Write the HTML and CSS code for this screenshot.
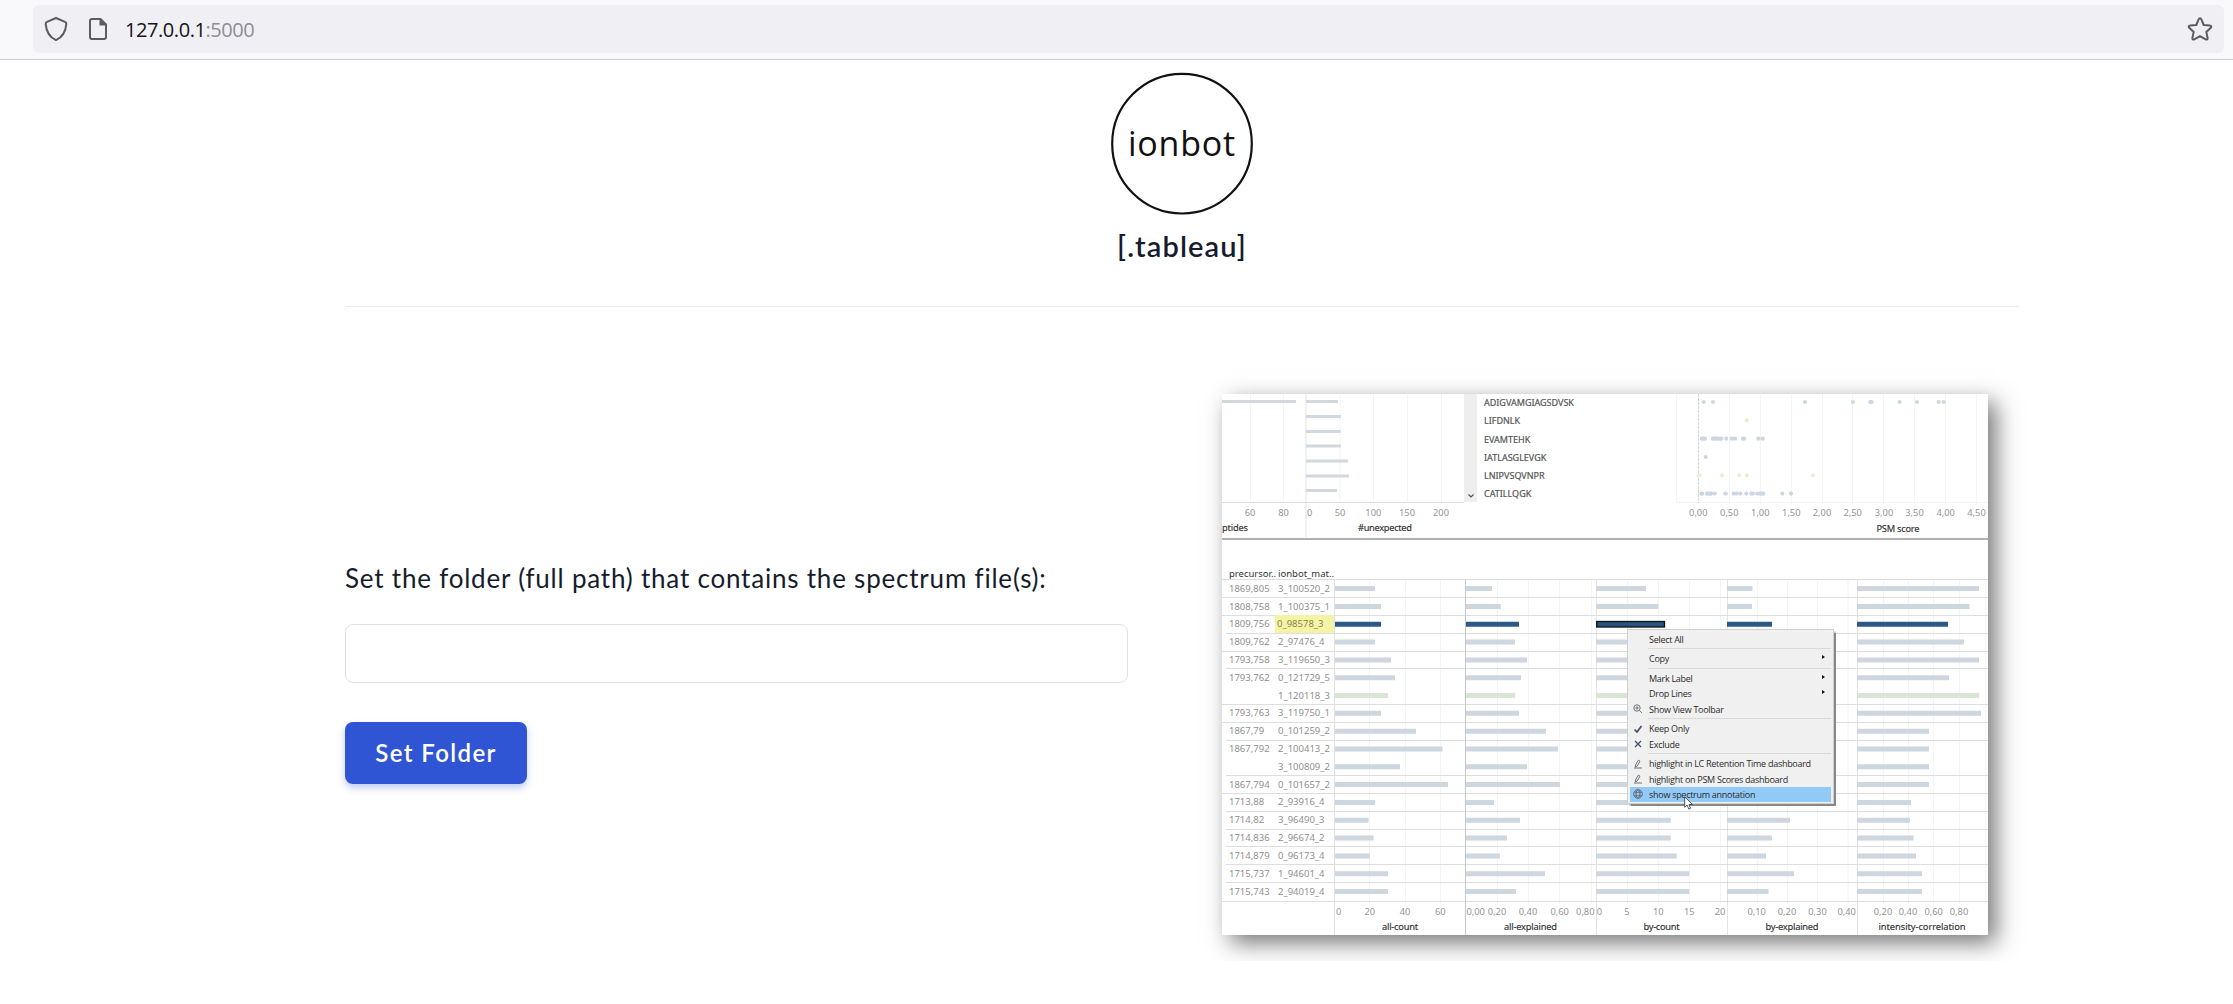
FILE: index.html
```html
<!DOCTYPE html>
<html lang="en">
<head>
<meta charset="utf-8">
<title>ionbot [.tableau]</title>
<link rel="stylesheet" href="styles.css">
</head>
<body>
<header class="browser-bar">
  <div class="url-field">
    <svg class="icon-shield" width="24" height="26" viewBox="0 0 24 26"><path d="M12 2 21.5 6.2c.8.3.9.8.8 2C21.6 16.500 18 21.500 12 24.200 6 21.500 2.400 16.500 1.700 8.200c-.1-1.200 0-1.700.8-2Z"/></svg>
    <svg class="icon-page" width="20" height="24" viewBox="0 0 20 24"><path d="M4 2h8.500L18 7.500V20a2 2 0 0 1-2 2H4a2 2 0 0 1-2-2V4a2 2 0 0 1 2-2Z"/><path class="fold" d="M11.500 2v6.500H18Z"/></svg>
    <div class="url">127.0.0.1<span>:5000</span></div>
    <svg class="icon-star" width="26" height="26" viewBox="0 0 26 26"><path d="M13 2.200c.6 0 1 .3 1.300 1L16.700 9l6.200.6c1.400.1 1.900 1.300.9 2.200l-4.500 4.100 1.300 6c.3 1.400-.8 2.100-1.900 1.400L13 20.200l-5.700 3.100c-1.100.7-2.200 0-1.900-1.400l1.300-6-4.500-4.100c-1-.9-.5-2.100.9-2.200L9.300 9l2.400-5.800c.3-.7.7-1 1.300-1Z"/></svg>
  </div>
</header>
<main class="page">
  <div class="brand">
    <svg class="logo" width="144" height="144" viewBox="0 0 144 144">
      <circle cx="72" cy="72.700" r="69.800"/>
      <text x="18" y="84.700" textLength="107">ionbot</text>
    </svg>
    <h1>[.tableau]</h1>
  </div>
  <div class="columns">
    <form class="folder-form">
      <label for="folder">Set the folder (full path) that contains the spectrum file(s):</label>
      <input id="folder" type="text">
      <button type="button"><span>Set Folder</span></button>
    </form>
    <div class="dashboard">
      <section class="overview">
        <svg class="chart" width="242" height="144" viewBox="0 0 242 144">
          <path class="grid" d="M28.500 0v109M61.500 0v109M118 0v109M151.500 0v109M185.500 0v109M219.500 0v109"/>
          <path class="divider" d="M84 0v143"/>
          <path class="line" d="M0 108.500h242"/>
          <path class="bars thin" d="M0 7.500h74M84 7.500h32M84 22.500h35M84 37.500h34.700M84 52h35M84 67h42M84 82h43M84 96.500h31"/>
          <g class="ticks"><text x="28" y="121.500">60</text><text x="61.500" y="121.500">80</text><text x="87.700" y="121.500">0</text><text x="118" y="121.500">50</text><text x="151.300" y="121.500">100</text><text x="185" y="121.500">150</text><text x="219" y="121.500">200</text></g>
          <g class="titles"><text class="start" x="0" y="137.300" textLength="26">ptides</text><text x="163" y="137.300" textLength="54">#unexpected</text></g>
        </svg>
        <div class="scrollbar"><svg width="6" height="4" viewBox="0 0 6 4"><path d="M.5.5 3 3 5.500.5"/></svg></div>
        <ul class="peptides">
          <li>ADIGVAMGIAGSDVSK</li><li>LIFDNLK</li><li>EVAMTEHK</li><li>IATLASGLEVGK</li><li>LNIPVSQVNPR</li><li>CATILLQGK</li>
        </ul>
        <svg class="chart" width="312" height="144" viewBox="0 0 312 144">
          <path class="grid" d="M.5 0v108.500H312M53.500 0v110M84.500 0v110M115.500 0v110M146.500 0v110M176.500 0v110M207.500 0v110M238.500 0v110M269.500 0v110M300.500 0v110"/>
          <path class="zero" d="M22.500 0v109"/>
          <path class="dots" d="M27.700 8h0M37 8h0M129 8h0M177 8h0M194.300 8h1.400M223.700 8h0M241 8h0M262.700 8h0M267.700 8h0M26 44.700h3M37 44.700h5.300M45.300 44.700h0M50.300 44.700h0M55.700 44.700h0M59 44.700h0M67 44.700h1M82.300 44.700h0M86.700 44.700h0M29.700 63h0M25.300 99.600h1M31 99.600h4.300M38.700 99.600h0M49.300 99.600h.5M57.700 99.600h0M60.300 99.600h0M64.300 99.600h0M70.300 99.600h0M75.300 99.600h1.700M81.300 99.600h0M84 99.600h3.300M106.300 99.600h0M115 99.600h0"/>
          <path class="dots alt" d="M70.700 26.300h0M22.700 81.300h.8M46 81.300h0M63.300 81.300h0M70.700 81.300h0M137 81.300h0"/>
          <g class="ticks"><text x="22.300" y="122">0,00</text><text x="53.300" y="122">0,50</text><text x="84.300" y="122">1,00</text><text x="115.300" y="122">1,50</text><text x="146" y="122">2,00</text><text x="176.700" y="122">2,50</text><text x="208" y="122">3,00</text><text x="238.500" y="122">3,50</text><text x="269.700" y="122">4,00</text><text x="300.500" y="122">4,50</text></g>
          <g class="titles"><text x="222" y="138" textLength="43">PSM score</text></g>
        </svg>
      </section>
      <section class="matches">
        <div class="match-labels">
          <div class="head"><span>precursor..</span><span>ionbot_mat..</span></div>
          <div class="label-plot">
            <svg class="chart label-lines" width="112" height="356" viewBox="0 0 112 356"><path class="line" d="M0 .5H112M0 18.500H112M0 36.500H112M4 54.500H112M0 72.500H112M4 89.500H112M0 125.500H112M0 143.500H112M4 161.500H112M4 196.500H112M0 214.500H112M4 232.500H112M4 250.500H112M4 267.500H112M4 285.500H112M4 303.500H112M0 322.500H112"/></svg>
            <div class="rows">
              <span>1869,805</span><span>3_100520_2</span>
              <span>1808,758</span><span>1_100375_1</span>
              <span>1809,756</span><span class="picked">0_98578_3</span>
              <span>1809,762</span><span>2_97476_4</span>
              <span>1793,758</span><span>3_119650_3</span>
              <span>1793,762</span><span>0_121729_5</span>
              <span></span><span>1_120118_3</span>
              <span>1793,763</span><span>3_119750_1</span>
              <span>1867,79</span><span>0_101259_2</span>
              <span>1867,792</span><span>2_100413_2</span>
              <span></span><span>3_100809_2</span>
              <span>1867,794</span><span>0_101657_2</span>
              <span>1713,88</span><span>2_93916_4</span>
              <span>1714,82</span><span>3_96490_3</span>
              <span>1714,836</span><span>2_96674_2</span>
              <span>1714,879</span><span>0_96173_4</span>
              <span>1715,737</span><span>1_94601_4</span>
              <span>1715,743</span><span>2_94019_4</span>
            </div>
          </div>
        </div>
        <svg class="chart" width="131" height="356" viewBox="0 0 131 356">
          <defs><path id="row-lines" d="M0 .5H131M0 18.500H131M0 36.500H131M0 54.500H131M0 72.500H131M0 89.500H131M0 125.500H131M0 143.500H131M0 161.500H131M0 196.500H131M0 214.500H131M0 232.500H131M0 250.500H131M0 267.500H131M0 285.500H131M0 303.500H131M0 322.500H131"/></defs>
          <path class="grid" d="M35.500 1v324M71.500 1v324M106.500 1v324"/><use class="line" href="#row-lines"/><path class="divider" d="M.5 1v355"/>
          <path class="bars" d="M1 9.600h40M1 27.400h46M1 63.100h40M1 80.900h56M1 98.700h60M1 134.300h46M1 152.200h81M1 170h107.500M1 187.800h65M1 205.600h113M1 223.400h40M1 241.300h33.500M1 259.100h38.500M1 276.900h35M1 294.700h53M1 312.500h53"/>
          <path class="bars green" d="M1 116.500h53"/><path class="bars dark" d="M1 45.200h46"/>
          <g class="ticks"><text x="4.700" y="336">0</text><text x="35.700" y="336">20</text><text x="71" y="336">40</text><text x="106.300" y="336">60</text></g>
          <g class="titles"><text x="66" y="351.300" textLength="36">all-count</text></g>
        </svg>
        <svg class="chart" width="131" height="356" viewBox="0 0 131 356">
          <path class="grid" d="M32.500 1v324M63.500 1v324M94.500 1v324M126.500 1v324"/><use class="line" href="#row-lines"/><path class="axis" d="M.5 1v355"/>
          <path class="bars" d="M1 9.600h26M1 27.400h34.700M1 63.100h49M1 80.900h61M1 98.700h55M1 134.300h53M1 152.200h80M1 170h92M1 187.800h61M1 205.600h94M1 223.400h28M1 241.300h54M1 259.100h41M1 276.900h34M1 294.700h79M1 312.500h50"/>
          <path class="bars green" d="M1 116.500h49"/><path class="bars dark" d="M1 45.200h53"/>
          <g class="ticks"><text x="10.700" y="336">0,00</text><text x="32" y="336">0,20</text><text x="63" y="336">0,40</text><text x="94.700" y="336">0,60</text><text x="120.300" y="336">0,80</text></g>
          <g class="titles"><text x="65.500" y="351.300" textLength="53">all-explained</text></g>
        </svg>
        <svg class="chart" width="131" height="356" viewBox="0 0 131 356">
          <path class="grid" d="M31.500 1v324M62.500 1v324M93.500 1v324M124.500 1v324"/><use class="line" href="#row-lines"/><path class="divider" d="M.5 1v355"/>
          <path class="bars" d="M0 9.600h50M0 27.400h62.300M0 63.100h60M0 80.900h60M0 98.700h60M0 134.300h60M0 152.200h60M0 170h60M0 187.800h60M0 205.600h60M0 223.400h60M0 241.300h74.700M0 259.100h74.700M0 276.900h80.700M0 294.700h93.300M0 312.500h93.300"/>
          <path class="bars green" d="M0 116.500h60"/><rect class="focused" x=".7" y="42.500" width="67.800" height="5.500"/>
          <g class="ticks"><text x="3.500" y="336">0</text><text x="31" y="336">5</text><text x="62.300" y="336">10</text><text x="93.300" y="336">15</text><text x="124" y="336">20</text></g>
          <g class="titles"><text x="65.500" y="351.300" textLength="36">by-count</text></g>
        </svg>
        <svg class="chart" width="130" height="356" viewBox="0 0 130 356">
          <path class="grid" d="M30.500 1v324M60.500 1v324M90.500 1v324M121 1v324"/><use class="line" href="#row-lines"/><path class="axis" d="M0 1v355"/>
          <path class="bars" d="M0 9.600h25.500M0 27.400h25M0 63.100h40M0 241.300h63M0 259.100h45M0 276.900h39M0 294.700h67M0 312.500h41.500M0 223.400h31"/>
          <path class="bars dark" d="M0 45.200h45"/>
          <g class="ticks"><text x="29.700" y="336">0,10</text><text x="60" y="336">0,20</text><text x="90.500" y="336">0,30</text><text x="119.700" y="336">0,40</text></g>
          <g class="titles"><text x="65" y="351.300" textLength="53">by-explained</text></g>
        </svg>
        <svg class="chart" width="131" height="356" viewBox="0 0 131 356">
          <path class="grid" d="M26.500 1v324M51.500 1v324M76.500 1v324M102.500 1v324M128.500 1v324"/><use class="line" href="#row-lines"/><path class="divider" d="M.5 1v355"/>
          <path class="bars" d="M0 9.600h122M0 27.400h112.500M0 63.100h107M0 80.900h122M0 98.700h92M0 134.300h124M0 152.200h72M0 170h72M0 187.800h72M0 205.600h72M0 223.400h54M0 241.300h53M0 259.100h56.500M0 276.900h59M0 294.700h65M0 312.500h65"/>
          <path class="bars green" d="M0 116.500h122"/><path class="bars dark" d="M0 45.200h91"/>
          <g class="ticks"><text x="26" y="336">0,20</text><text x="51" y="336">0,40</text><text x="76.700" y="336">0,60</text><text x="102" y="336">0,80</text></g>
          <g class="titles"><text x="65" y="351.300" textLength="87">intensity-correlation</text></g>
        </svg>
      </section>
      <div class="context-menu">
        <div class="item"><i></i><span>Select All</span></div>
        <hr>
        <div class="item sub"><i></i><span>Copy</span></div>
        <hr>
        <div class="item sub"><i></i><span>Mark Label</span></div>
        <div class="item sub"><i></i><span>Drop Lines</span></div>
        <div class="item"><i><svg width="10" height="10" viewBox="0 0 10 10"><circle cx="4" cy="4" r="3.200"/><path d="M4 2.300v3.400M2.300 4h3.400M6.400 6.400 9 9"/></svg></i><span>Show View Toolbar</span></div>
        <hr>
        <div class="item"><i><svg width="10" height="10" viewBox="0 0 10 10"><path class="bold" d="M1.500 5.500 4 8 8.500 2"/></svg></i><span>Keep Only</span></div>
        <div class="item"><i><svg width="10" height="10" viewBox="0 0 10 10"><path class="bold thin-x" d="M2 2l6 6M8 2 2 8"/></svg></i><span>Exclude</span></div>
        <hr>
        <div class="item"><i><svg width="10" height="10" viewBox="0 0 10 10"><path d="M2.500 6 5.300 1.200 7 2.200 4.200 7 2.300 8ZM1 9h8"/></svg></i><span>highlight in LC Retention Time dashboard</span></div>
        <div class="item"><i><svg width="10" height="10" viewBox="0 0 10 10"><path d="M2.500 6 5.300 1.200 7 2.200 4.200 7 2.300 8ZM1 9h8"/></svg></i><span>highlight on PSM Scores dashboard</span></div>
        <div class="item active"><i><svg width="10" height="10" viewBox="0 0 10 10"><circle cx="5" cy="5" r="4.300"/><ellipse cx="5" cy="5" rx="2" ry="4.300"/><path d="M1.200 3.300h7.600M1.200 6.700h7.600"/></svg></i><span>show spectrum annotation</span></div>
        <svg class="cursor" width="10" height="14" viewBox="0 0 10 14"><path d="M.7.8v10.500l2.400-2.200 1.700 4 1.800-.8-1.700-3.800h3.600Z"/></svg>
      </div>
    </div>
  </div>
</main>
</body>
</html>
```
FILE: styles.css
```css
* { box-sizing: border-box; }
body { margin: 0; min-height: 100vh; background: #fff; color: #161c2d; font-family: Lato, "Open Sans", sans-serif; }

.browser-bar { height: 60px; padding: 5px 9px 6px 33px; background: #f9f9fb; border-bottom: 1px solid #ccccce; }
.url-field { display: flex; align-items: center; height: 48px; padding: 0 11px; border-radius: 6px; background: #f0f0f4; }
.url-field svg { fill: none; stroke: #5b5b60; stroke-width: 2; stroke-linejoin: round; }
.url-field .fold { fill: #5b5b60; stroke: none; }
.icon-page { margin-left: 20px; }
.url { flex: 1; margin-left: 17px; padding-top: 2px; font: 20px/28px "Open Sans", "Noto Sans", sans-serif; letter-spacing: -.43px; color: #15141a; }
.url span { color: #8e8e93; }

.page { padding: 11px 214px 60px 345px; }
.brand { display: flex; flex-direction: column; align-items: center; height: 236px; border-bottom: 1px solid #e9ecef; }
.logo circle { fill: none; stroke: #111; stroke-width: 2.2; }
.logo text { font: 34px "Open Sans", sans-serif; fill: #111; }
h1 { margin: 13px 0 0; font-size: 29px; line-height: 36px; font-weight: 600; letter-spacing: 1.1px; }

.columns { display: flex; justify-content: space-between; padding: 87px 31px 0 0; }
.folder-form { width: 783px; padding-top: 164px; }
.folder-form label { display: block; font-size: 26px; line-height: 40px; letter-spacing: .79px; white-space: nowrap; }
.folder-form input { display: block; width: 100%; height: 59px; margin: 26px 0 39px; border: 1px solid #dee2e6; border-radius: 8px; background: #fff; }
.folder-form button { width: 182px; height: 62px; padding: 0; border: 0; border-radius: 8px; background: #2f55d4; color: #fff; font: 600 24px/32px Lato, sans-serif; letter-spacing: 1.4px; box-shadow: 0 4px 7px rgba(47, 85, 212, .3); }

.dashboard { position: relative; width: 766px; height: 541px; background: #fff; box-shadow: 8px 8px 22px #777; clip-path: inset(-30px -40px -26px -30px); font-family: "Noto Sans", "Open Sans", sans-serif; font-size: 9.5px; }
.overview { display: flex; height: 146px; border-bottom: 2px solid #b1b1b1; }
.chart { display: block; flex: none; overflow: hidden; }
.chart path, .chart .line { fill: none; stroke-width: 1; }
.grid { stroke: #f4f4f4; }
.line { stroke: #dedede; }
.divider { stroke: #e2e2e2; }
.axis { stroke: #c8c8c8; }
.zero { stroke: #d4d4d4; stroke-dasharray: 3 1; }
.chart .bars { stroke: #ced6df; stroke-width: 5; }
.chart .thin { stroke: #d2d8de; stroke-width: 3; }
.chart .green { stroke: #d9e5d5; }
.chart .dark { stroke: #2c5a87; }
.focused { fill: #28547f; stroke: #111; stroke-width: 1.3; }
.chart .dots { stroke: #ced7e1; stroke-width: 4.2; stroke-linecap: round; }
.chart .alt { stroke: #f2e9cf; }
.chart text { text-anchor: middle; }
.chart .start { text-anchor: start; }
.ticks { font-size: 9.3px; fill: #959595; }
.titles { font-size: 9.3px; fill: #333; stroke: #333; stroke-width: .15px; }
.scrollbar { display: flex; align-items: flex-end; justify-content: center; width: 13px; height: 108px; padding-bottom: 4px; background: #eee; }
.scrollbar path { fill: none; stroke: #555; stroke-width: 1.2; }
.peptides { width: 199px; margin: 0; padding: 0 0 0 7px; list-style: none; font-size: 9px; line-height: 18.300px; color: #555; -webkit-text-stroke: .2px #555; }

.matches { display: flex; align-items: flex-end; height: 395px; }
.match-labels { width: 112px; }
.head, .rows { display: grid; grid-template-columns: 47px 58px; padding-left: 7px; }
.head { gap: 0 2px; height: 12px; line-height: 13px; color: #333; white-space: nowrap; }
.label-plot { display: grid; }
.label-plot > * { grid-area: 1 / 1; }
.rows { grid-auto-rows: 17.820px; align-content: start; height: 356px; padding-top: .7px; line-height: 17.820px; color: #8f8f8f; }
.rows span:nth-child(even) { padding-left: 2px; }
.rows .picked { width: 59px; margin-left: -1px; padding-left: 3px; background: #f5f4a5; color: #85854a; }

.context-menu { position: absolute; left: 405px; top: 235px; width: 207px; height: 175px; padding: 1.600px 2px; border: 1px solid #d0d0d0; background: #f0f0f0; box-shadow: 1.500px 1.500px 1px #888; font: 9px "Open Sans", sans-serif; letter-spacing: -.28px; color: #2b2b2b; }
.context-menu hr { height: 1px; margin: 1.400px 0 2px 18px; border: 0; background: #d9d9d9; }
.item { display: flex; align-items: center; height: 15.300px; white-space: nowrap; }
.item i { display: flex; justify-content: center; width: 15px; margin-right: 4px; }
.item svg { fill: none; stroke: #5c6570; stroke-width: .9; }
.item .bold { stroke: #3f5068; stroke-width: 1.700; }
.item .thin-x { stroke-width: 1.300; }
.sub::after { content: ""; margin: 0 6px 3px auto; border: 2.500px solid transparent; border-left: 3px solid #111; border-right: 0; }
.active { background: #91c9f7; }
.cursor { position: absolute; left: 56px; top: 166px; fill: #fff; stroke: #444; stroke-width: .9; }
```
